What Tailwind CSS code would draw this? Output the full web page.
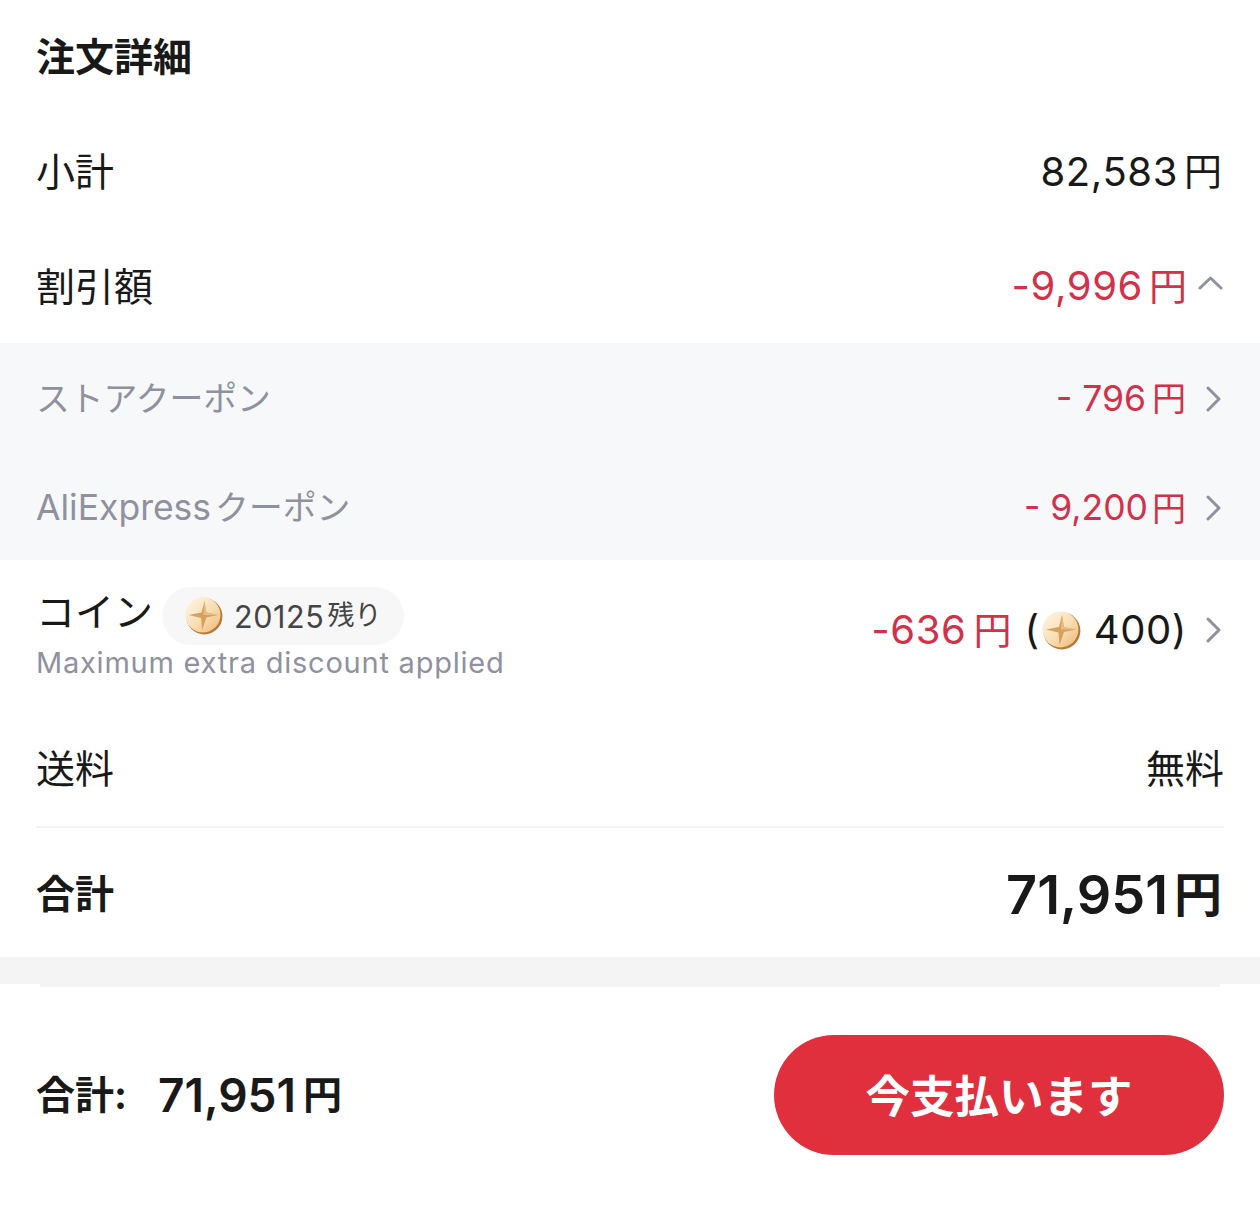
<!DOCTYPE html>
<html lang="ja">
<head>
    <meta charset="UTF-8">
    <meta name="viewport" content="width=device-width, initial-scale=1.0">
    <title>注文詳細</title>
    <script src="https://cdn.jsdelivr.net/npm/@tailwindcss/browser@4"></script>
</head>
<body class="bg-white font-['Inter','Noto_Sans_CJK_JP',sans-serif] text-[#191919] w-[1260px] h-[1208px] overflow-hidden">
    <svg width="0" height="0" class="absolute">
        <defs>
            <linearGradient id="coin" x1="0.1" y1="0.1" x2="0.9" y2="0.9">
                <stop offset="0" stop-color="#fdf3e2"/>
                <stop offset="0.55" stop-color="#f8deb2"/>
                <stop offset="1" stop-color="#eec084"/>
            </linearGradient>
            <symbol id="coin-icon" viewBox="0 0 40 40">
                <circle cx="20.8" cy="20.8" r="18.6" fill="#b5793a"/>
                <circle cx="19.4" cy="19.4" r="18" fill="url(#coin)"/>
                <path d="M21 5 L23 17 L35 19.5 L23 22 L18.5 35 L17.5 22.5 L5 19.5 L18 17 Z" fill="#d6a05e"/>
                <path d="M21 5 L23 17 L35 19.5 L20 19.5 Z" fill="#e9bd82"/>
            </symbol>
        </defs>
    </svg>

    <h1 class="h-[114px] px-9 flex items-center text-[39px] font-bold">注文詳細</h1>

    <div class="h-[115px] px-9 flex items-center justify-between text-[39px]">
        <span class="translate-y-[1px]">小計</span>
        <span class="flex items-center text-[40px] tracking-[0.6px]">82,583<span class="ml-[6px] mr-[2px] text-[38px] tracking-normal">円</span></span>
    </div>
    <div class="h-[114px] px-9 flex items-center justify-between text-[39px]">
        <span class="translate-y-[1px]">割引額</span>
        <span class="flex items-center text-[40px] tracking-[0.6px] text-[#d3304a]">-9,996<span class="ml-[6px] text-[38px] tracking-normal">円</span>
            <svg class="ml-[11px] mr-[1px] w-[25px] h-[26px] -translate-y-[3px]" viewBox="0 0 25 26" fill="none" stroke="#8f91a0" stroke-width="3" stroke-linecap="round" stroke-linejoin="round"><path d="M2 18 L12.5 8 L23 18"/></svg>
        </span>
    </div>

    <div class="bg-[#f7f8fa] h-[217px] text-[33.8px] text-[#8f91a0]">
        <div class="h-[109px] pl-9 pr-[39px] flex items-center justify-between">
            <span class="translate-y-[2px]">ストアクーポン</span>
            <span class="flex items-center text-[#d3304a] translate-y-[1px]"><span class="text-[35.5px]">- 796</span><span class="ml-[6px] text-[34px]">円</span>
                <svg class="ml-[19px] w-[16px] h-[26px]" viewBox="0 0 16 26" fill="none" stroke="#8f91a0" stroke-width="3" stroke-linecap="round" stroke-linejoin="round"><path d="M3 2 L14 13 L3 24"/></svg>
            </span>
        </div>
        <div class="h-[108px] pl-9 pr-[39px] flex items-center justify-between">
            <span class="flex items-baseline translate-y-[2px]"><span class="text-[35.5px]">AliExpress</span><span class="ml-[4px]">クーポン</span></span>
            <span class="flex items-center text-[#d3304a] translate-y-[2px]"><span class="text-[35.5px]">- 9,200</span><span class="ml-[4px] text-[34px]">円</span>
                <svg class="ml-[19px] w-[16px] h-[26px]" viewBox="0 0 16 26" fill="none" stroke="#8f91a0" stroke-width="3" stroke-linecap="round" stroke-linejoin="round"><path d="M3 2 L14 13 L3 24"/></svg>
            </span>
        </div>
    </div>

    <div class="h-[140px] pl-9 pr-[39px] flex items-center justify-between">
        <div class="flex flex-col pt-[7px]">
            <div class="flex items-center h-[58px]">
                <span class="text-[39px] -translate-y-[3px]">コイン</span>
                <span class="ml-[9px] h-[58px] pl-[22px] pr-[23px] rounded-full bg-[#f7f7f7] flex items-center text-[#444]">
                    <svg class="w-[39px] h-[39px] mr-[11px]"><use href="#coin-icon"/></svg>
                    <span class="text-[30.5px] tracking-[0.6px] translate-y-[1px]">20125</span><span class="ml-[3px] text-[27px] translate-y-[1px]">残り</span>
                </span>
            </div>
            <span class="text-[29px] leading-[36px] tracking-[0.77px] text-[#8f91a0]">Maximum extra discount applied</span>
        </div>
        <div class="flex items-center text-[40px] tracking-[0.6px]">
            <span class="flex items-center text-[#d3304a]">-636<span class="ml-[7px] text-[38px] tracking-normal">円</span></span>
            <span class="ml-[13px] flex items-center">(<svg class="w-[40px] h-[40px] ml-[1px]"><use href="#coin-icon"/></svg><span class="ml-[13px]">400)</span></span>
            <svg class="ml-[18px] w-[16px] h-[26px]" viewBox="0 0 16 26" fill="none" stroke="#8f91a0" stroke-width="3" stroke-linecap="round" stroke-linejoin="round"><path d="M3 2 L14 13 L3 24"/></svg>
        </div>
    </div>

    <div class="h-[128px] mx-9 pt-[12px] flex items-center justify-between text-[39px] border-b-2 border-[#f3f3f3]">
        <span>送料</span>
        <span>無料</span>
    </div>
    <div class="h-[129px] px-9 pt-[4px] flex items-center justify-between">
        <span class="text-[39px] font-bold">合計</span>
        <span class="flex items-center font-semibold text-[54px]">71,951<span class="ml-[6px] mr-[2px] text-[48px]">円</span></span>
    </div>

    <div class="h-[27px] bg-[#f4f4f4]"></div>
    <div class="relative h-[221px] bg-white px-9 flex items-center justify-between">
        <div class="absolute left-10 right-10 top-0 h-[3px] bg-[#f4f4f4]"></div>
        <span class="flex items-center font-semibold translate-y-[1px]"><span class="text-[39px] font-bold">合計:</span><span class="ml-[31px] text-[46px]">71,951</span><span class="ml-[7px] text-[39px] font-bold">円</span></span>
        <button class="w-[450px] h-[120px] pt-[6px] rounded-[60px] bg-[#e0303e] text-white text-[44.5px] font-bold">今支払います</button>
    </div>
</body>
</html>
